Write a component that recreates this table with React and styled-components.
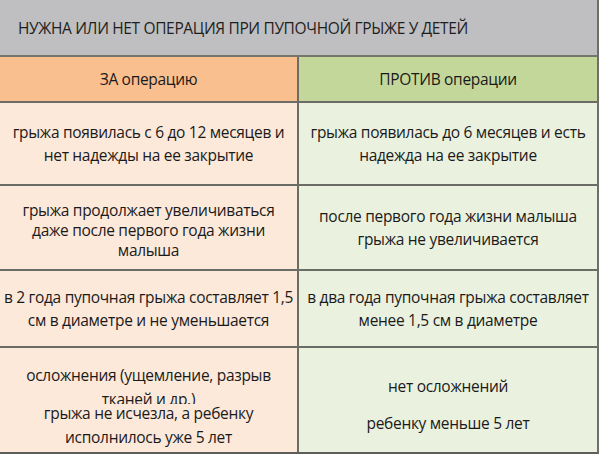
import React from "react";
import styled, { createGlobalStyle } from "styled-components";

const GlobalStyle = createGlobalStyle`
  html, body {
    margin: 0;
    padding: 0;
    background: #ffffff;
  }
  body {
    font-family: "Open Sans", Lato, "Liberation Sans", sans-serif;
    color: #1a1a1a;
  }
`;

const Table = styled.div`
  width: 597px;
  border-right: 2px solid #6f6f6a;
  border-bottom: 2px solid #5e5e5a;
`;

const TitleBar = styled.div`
  height: 55px;
  display: flex;
  align-items: center;
  padding: 0 18px;
  background: #bfbfc1;
  border-bottom: 2px solid #76766f;
  font-size: 15.5px;
  letter-spacing: -0.35px;
  color: #1e1e1e;
`;

const Row = styled.div`
  display: grid;
  grid-template-columns: 299px 1fr;
  height: ${(p) => p.$h}px;
  border-bottom: ${(p) => (p.$last ? "none" : "2px solid #6c6c66")};
`;

const tones = {
  pro: { head: "#fabf8f", body: "#fde9da" },
  con: { head: "#c4d79b", body: "#ebf1df" },
};

const Cell = styled.div`
  display: flex;
  flex-direction: column;
  align-items: center;
  justify-content: ${(p) => p.$justify || "center"};
  gap: ${(p) => p.$gap || 0}px;
  padding-top: ${(p) => p.$pt || 0}px;
  box-sizing: border-box;
  background: ${(p) => (p.$head ? tones[p.$tone].head : tones[p.$tone].body)};
  border-right: ${(p) => (p.$tone === "pro" ? "2px solid #6c6c66" : "none")};
  font-size: 15.5px;
  letter-spacing: -0.3px;
  line-height: ${(p) => p.$lh || 23}px;
  text-align: center;
  white-space: nowrap;
  overflow: hidden;
`;

// first note in the last row is cut off by the one under it
const Clipped = styled.div`
  height: ${(p) => p.$h}px;
  margin-top: ${(p) => p.$top}px;
  overflow: hidden;
`;

const Note = styled.div`
  margin-top: ${(p) => p.$top || 0}px;
  line-height: 24px;
`;

const Line = ({ lines }) =>
  lines.map((l, i) => (
    <React.Fragment key={i}>
      {l}
      {i < lines.length - 1 && <br />}
    </React.Fragment>
  ));

export default function App() {
  return (
    <>
      <GlobalStyle />
      <Table>
        <TitleBar>НУЖНА ИЛИ НЕТ ОПЕРАЦИЯ ПРИ ПУПОЧНОЙ ГРЫЖЕ У ДЕТЕЙ</TitleBar>

        <Row $h={44}>
          <Cell $tone="pro" $head>ЗА операцию</Cell>
          <Cell $tone="con" $head>ПРОТИВ операции</Cell>
        </Row>

        <Row $h={81}>
          <Cell $tone="pro">
            <div>
              <Line lines={["грыжа появилась с 6 до 12 месяцев и", "нет надежды на ее закрытие"]} />
            </div>
          </Cell>
          <Cell $tone="con">
            <div>
              <Line lines={["грыжа появилась до 6 месяцев и есть", "надежда на ее закрытие"]} />
            </div>
          </Cell>
        </Row>

        <Row $h={83}>
          <Cell $tone="pro" $lh={20} $pt={5}>
            <div>
              <Line
                lines={[
                  "грыжа продолжает увеличиваться",
                  "даже после первого года жизни",
                  "малыша",
                ]}
              />
            </div>
          </Cell>
          <Cell $tone="con">
            <div>
              <Line lines={["после первого года жизни малыша", "грыжа не увеличивается"]} />
            </div>
          </Cell>
        </Row>

        <Row $h={75}>
          <Cell $tone="pro">
            <div>
              <Line lines={["в 2 года пупочная грыжа составляет 1,5", "см в диаметре и не уменьшается"]} />
            </div>
          </Cell>
          <Cell $tone="con">
            <div>
              <Line lines={["в два года пупочная грыжа составляет", "менее 1,5 см в диаметре"]} />
            </div>
          </Cell>
        </Row>

        <Row $h={104} $last>
          <Cell $tone="pro" $justify="flex-start" $lh={24}>
            <Clipped $h={41} $top={15}>
              <Line lines={["осложнения (ущемление, разрыв", "тканей и др.)"]} />
            </Clipped>
            <Note $top={-3}>
              <Line lines={["грыжа не исчезла, а ребенку", "исполнилось уже 5 лет"]} />
            </Note>
          </Cell>
          <Cell $tone="con" $gap={14} $pt={10}>
            <div>нет осложнений</div>
            <div>ребенку меньше 5 лет</div>
          </Cell>
        </Row>
      </Table>
    </>
  );
}
